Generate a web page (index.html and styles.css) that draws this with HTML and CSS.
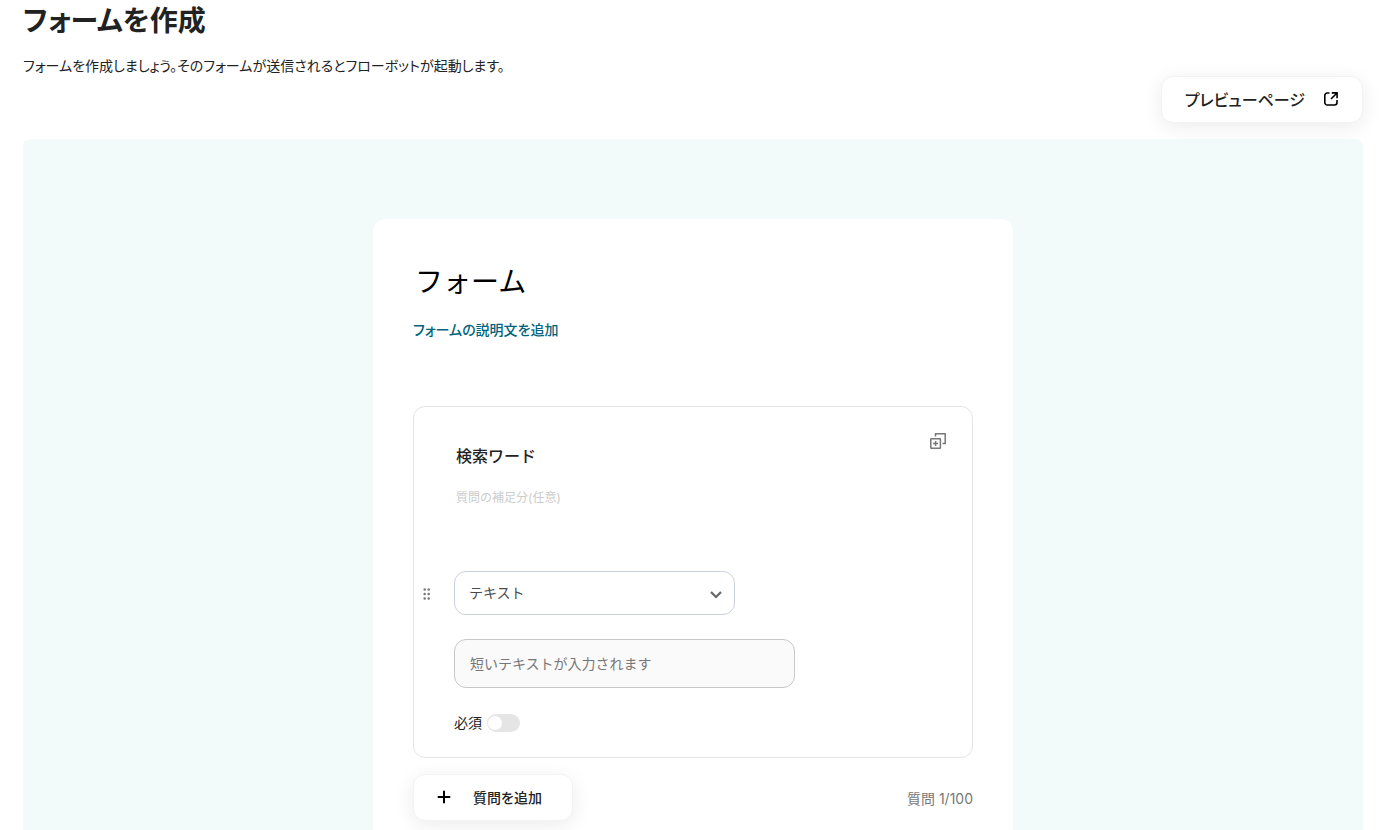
FILE: index.html
```html
<!DOCTYPE html>
<html lang="ja">
<head>
<meta charset="UTF-8">
<meta name="viewport" content="width=device-width, initial-scale=1.0">
<title>フォームを作成</title>
<link rel="stylesheet" href="styles.css">
</head>
<body>
<header class="page-header">
  <h1>フォームを作成</h1>
  <p>フォームを作成しましょう。そのフォームが送信されるとフローボットが起動します。</p>
</header>
<div class="toolbar">
  <button type="button" class="btn preview-btn">
    プレビューページ
    <svg width="16" height="16" viewBox="0 0 16 16" fill="none" stroke="#000" stroke-width="1.6">
      <path d="M6.500 2H4.300A2.500 2.500 0 0 0 1.800 4.500V11.500A2.500 2.500 0 0 0 4.300 14H11.500A2.500 2.500 0 0 0 14 11.500V9"/>
      <path d="M8.800 1.900H14.100V7.200M14 2L8 8"/>
    </svg>
  </button>
</div>
<main class="canvas">
  <form class="form-card">
    <input class="form-title" type="text" value="フォーム" aria-label="フォーム名">
    <button type="button" class="link-btn">フォームの説明文を追加</button>
    <section class="question">
      <div class="question-head">
        <input class="question-title" type="text" value="検索ワード" aria-label="質問">
        <button type="button" class="icon-btn" aria-label="質問を複製">
          <svg width="18" height="18" viewBox="0 0 18 18" fill="none" stroke="#777" stroke-width="1.5">
            <path d="M6.500 4.500V1.800H16.200V11.500H13.500"/>
            <rect x="1.800" y="6.700" width="9.600" height="9.600" rx="0.500"/>
            <path d="M6.600 9V14M4.100 11.500H9.100"/>
          </svg>
        </button>
      </div>
      <input class="question-note" type="text" placeholder="質問の補足分(任意)" aria-label="質問の補足分">
      <div class="question-body">
        <div class="type-row">
          <svg class="drag" width="8" height="14" viewBox="0 0 8 14" fill="#777">
            <circle cx="1.700" cy="3.500" r="1.250"/><circle cx="5.700" cy="3.500" r="1.250"/>
            <circle cx="1.700" cy="8" r="1.250"/><circle cx="5.700" cy="8" r="1.250"/>
            <circle cx="1.700" cy="12.500" r="1.250"/><circle cx="5.700" cy="12.500" r="1.250"/>
          </svg>
          <div class="select-wrap">
            <select aria-label="質問の種類">
              <option>テキスト</option>
            </select>
            <svg class="chevron" width="12" height="8" viewBox="0 0 12 8" fill="none" stroke="#666" stroke-width="2.200">
              <path d="M1 1L6 6L11 1"/>
            </svg>
          </div>
        </div>
        <input class="answer" type="text" placeholder="短いテキストが入力されます" aria-label="回答" disabled>
        <label class="required">必須<input class="switch" type="checkbox"></label>
      </div>
    </section>
    <div class="form-footer">
      <button type="button" class="btn add-btn">
        <svg width="14" height="14" viewBox="0 0 14 14" fill="none" stroke="#000" stroke-width="2" stroke-linecap="round">
          <path d="M7 1.500V12.500M1.500 7H12.500"/>
        </svg>
        質問を追加
      </button>
      <span class="count">質問 1/100</span>
    </div>
  </form>
</main>
</body>
</html>
```
FILE: styles.css
```css
* {
  box-sizing: border-box;
}
body {
  margin: 0;
  padding: 0 27px 0 23px;
  background: #fff;
  color: #222;
  font-family: "Inter", "Noto Sans CJK JP", sans-serif;
  font-size: 14px;
  overflow: hidden;
}
button, input, select {
  font-family: inherit;
}
.page-header {
  font-feature-settings: "palt";
}
.page-header h1 {
  margin: 0;
  font-size: 28px;
  line-height: 42px;
  font-weight: 600;
}
.page-header p {
  margin: 14px 0 0;
  line-height: 20px;
}
.toolbar {
  display: flex;
  justify-content: flex-end;
}
.btn {
  display: flex;
  align-items: center;
  height: 47px;
  padding: 0 23px 2px;
  border: 1px solid #f3f3f3;
  border-radius: 12px;
  background: #fff;
  color: #222;
  font-weight: 500;
  font-feature-settings: "palt";
  box-shadow: 0 4px 20px rgba(0, 0, 0, 0.08);
  cursor: pointer;
}
.preview-btn {
  gap: 18px;
  font-size: 16px;
}
.canvas {
  margin-top: 16px;
  padding: 80px 0;
  border-radius: 8px;
  background: #f2fbfa;
}
.form-card {
  max-width: 640px;
  margin: 0 auto;
  padding: 40px;
  border-radius: 12px;
  background: #fff;
}
.form-title, .question-title, .question-note {
  display: block;
  width: 100%;
  padding: 0 2px;
  border: 0;
  background: none;
  color: #222;
}
.form-title {
  height: 42px;
  color: #000;
  font-size: 28px;
}
.link-btn {
  display: block;
  margin-top: 19px;
  padding: 0;
  border: 0;
  background: none;
  color: #00637b;
  font-size: 14px;
  line-height: 20px;
  font-weight: 500;
  font-feature-settings: "palt";
  cursor: pointer;
}
.question {
  margin-top: 66px;
  padding: 24px 24px 24px 40px;
  border: 1px solid #e5e5e5;
  border-radius: 12px;
}
.question-head {
  display: flex;
  align-items: flex-start;
}
.question-title {
  height: 48px;
  font-size: 16px;
  font-weight: 500;
}
.icon-btn {
  display: flex;
  padding: 1px;
  border: 0;
  background: none;
}
.question-note {
  height: 32px;
  margin-top: 2px;
  font-size: 12px;
}
.question-note::placeholder {
  color: #ccc;
}
.question-body {
  display: flex;
  flex-direction: column;
  align-items: flex-start;
  margin-top: 58px;
}
.type-row {
  display: flex;
  align-items: center;
  gap: 23px;
  margin-left: -31px;
}
.select-wrap {
  position: relative;
}
.select-wrap select {
  appearance: none;
  display: block;
  width: 281px;
  height: 44px;
  padding: 0 14px 2px;
  border: 1px solid #cbd0d8;
  border-radius: 12px;
  background: #fff;
  color: #4b4b4b;
  font-size: 14px;
}
.chevron {
  position: absolute;
  top: 20px;
  right: 13px;
  pointer-events: none;
}
.answer {
  width: 341px;
  height: 49px;
  margin-top: 24px;
  padding: 0 15px;
  border: 1px solid #c8c8c8;
  border-radius: 12px;
  background: #fafafa;
  font-size: 14px;
}
.answer::placeholder {
  color: #777;
}
.required {
  display: flex;
  align-items: center;
  gap: 5px;
  margin-top: 25px;
  line-height: 20px;
}
.switch {
  appearance: none;
  width: 33px;
  height: 18px;
  margin: 0;
  padding: 2px 1px;
  border-radius: 9px;
  background: #e5e5e5;
}
.switch::before {
  content: "";
  display: block;
  width: 14px;
  height: 14px;
  border-radius: 50%;
  background: #fff;
}
.switch:checked {
  background: #00637b;
}
.form-footer {
  display: flex;
  align-items: center;
  justify-content: space-between;
  margin-top: 16px;
}
.add-btn {
  gap: 22px;
  padding-right: 30px;
  font-size: 14px;
}
.count {
  color: #777;
}
```
